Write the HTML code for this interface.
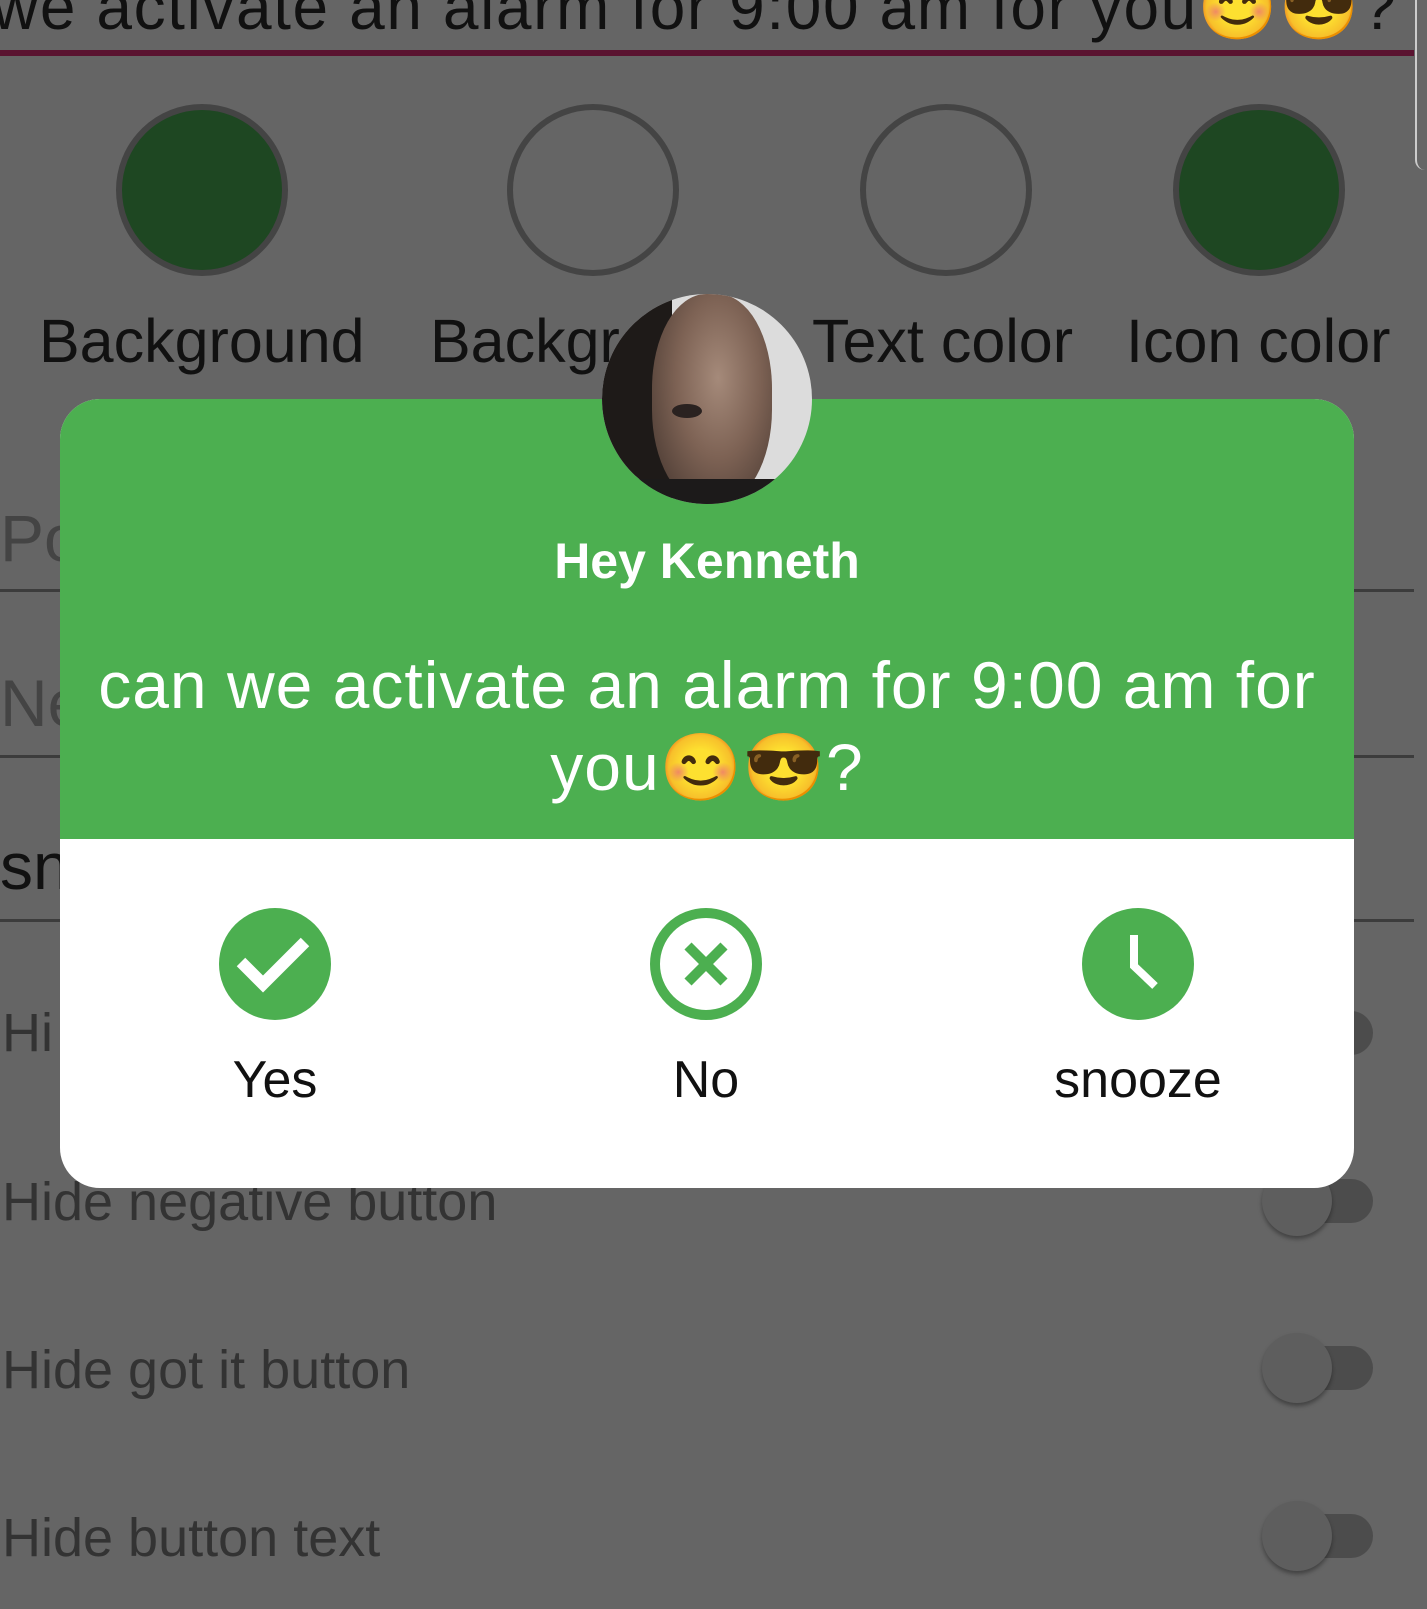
<!DOCTYPE html>
<html><head><meta charset="utf-8"><style>
*{margin:0;padding:0;box-sizing:border-box}
body{width:1427px;height:1609px;background:#656565;position:relative;overflow:hidden;font-family:"Liberation Sans",sans-serif}
.a{position:absolute;white-space:nowrap}
.c{position:absolute;width:172px;height:172px;border-radius:50%;border:6px solid #444;top:104px}
.lab{font-size:61px;color:#111;top:306px}
.hide{font-size:54px;color:#333;left:2px}
.line{position:absolute;left:0;width:1414px;height:3px;background:#3c3c3c}
.tr{position:absolute;left:1285px;width:88px;height:44px;border-radius:22px;background:#4c4c4c}
.kn{position:absolute;left:1262px;width:70px;height:70px;border-radius:50%;background:#5e5e5e;box-shadow:0 3px 4px rgba(0,0,0,.35)}
</style></head><body>
<div class="a" style="left:-8px;top:-30px;font-size:64px;color:#111;letter-spacing:1.6px">we activate an alarm for 9:00 am for you😊😎?</div>
<div style="position:absolute;left:0;top:50px;width:1414px;height:6px;background:#5a1330"></div>
<div style="position:absolute;right:0;top:0;width:12px;height:170px;border-left:2px solid #ccc;border-bottom-left-radius:10px;background:#666"></div>
<div class="c" style="left:116px;background:#1e4722"></div>
<div class="c" style="left:507px"></div>
<div class="c" style="left:860px"></div>
<div class="c" style="left:1173px;background:#1e4722"></div>
<div class="a lab" style="left:39px">Background</div>
<div class="a lab" style="left:430px">Background</div>
<div class="a lab" style="left:812px">Text color</div>
<div class="a lab" style="left:1126px">Icon color</div>
<div class="a" style="left:0;top:500px;font-size:66px;color:#444">Po</div><div class="line" style="top:589px"></div>
<div class="a" style="left:0;top:665px;font-size:66px;color:#444">Ne</div><div class="line" style="top:755px"></div>
<div class="a" style="left:0;top:828px;font-size:66px;color:#111">sn</div><div class="line" style="top:919px"></div>
<div class="a hide" style="top:1002px">Hi</div><div class="tr" style="top:1011px"></div><div class="kn" style="top:998px"></div>
<div class="a hide" style="top:1171px">Hide negative button</div><div class="tr" style="top:1179px"></div><div class="kn" style="top:1166px"></div>
<div class="a hide" style="top:1339px">Hide got it button</div><div class="tr" style="top:1346px"></div><div class="kn" style="top:1333px"></div>
<div class="a hide" style="top:1507px">Hide button text</div><div class="tr" style="top:1514px"></div><div class="kn" style="top:1501px"></div>

<div style="position:absolute;left:60px;top:399px;width:1294px;height:789px;border-radius:40px;background:#fff;overflow:hidden">
<div style="height:440px;background:#4caf50"></div>
</div>
<div style="position:absolute;left:602px;top:294px;width:210px;height:210px;border-radius:50%;overflow:hidden;background:#dcdcdc">
<div style="position:absolute;left:0;top:0;width:70px;height:210px;background:#1e1a18"></div>
<div style="position:absolute;left:50px;top:0;width:120px;height:210px;border-radius:45%;background:radial-gradient(ellipse at 55% 40%,#a58a7a 0,#7d6254 45%,#3d302a 100%)"></div>
<div style="position:absolute;left:70px;top:110px;width:30px;height:14px;border-radius:50%;background:#2a2220"></div>
<div style="position:absolute;left:20px;top:185px;width:170px;height:40px;background:#1c1a1a"></div>
</div>
<div class="a" style="left:0;width:1414px;text-align:center;top:532px;font-size:50px;font-weight:bold;color:#fff">Hey Kenneth</div>
<div class="a" style="left:60px;width:1294px;text-align:center;top:644px;font-size:66px;letter-spacing:1px;color:#fff;line-height:82px">can we activate an alarm for 9:00 am for<br>you😊😎?</div>

<svg style="position:absolute;left:0;top:0" width="1427" height="1609">
<circle cx="275" cy="964" r="56" fill="#4caf50"/>
<path d="M241 962 L263 984 L305 942" stroke="#fff" stroke-width="12" fill="none"/>
<circle cx="706" cy="964" r="51" fill="none" stroke="#4caf50" stroke-width="10"/>
<path d="M688 946 L724 982 M724 946 L688 982" stroke="#4caf50" stroke-width="10"/>
<circle cx="1138" cy="964" r="56" fill="#4caf50"/>
<path d="M1134 935 L1134 966 L1155 986" stroke="#fff" stroke-width="8" fill="none"/>
</svg>
<div class="a" style="left:175px;width:200px;text-align:center;top:1050px;font-size:52px;color:#111">Yes</div>
<div class="a" style="left:606px;width:200px;text-align:center;top:1050px;font-size:52px;color:#111">No</div>
<div class="a" style="left:1038px;width:200px;text-align:center;top:1050px;font-size:52px;color:#111">snooze</div>
</body></html>
